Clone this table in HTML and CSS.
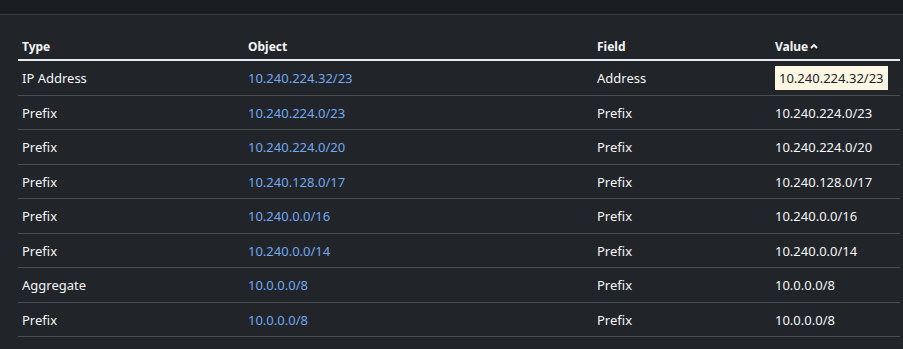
FILE: index.html
```html
<!DOCTYPE html>
<html lang="en">
  <head>
    <meta charset="utf-8" />
    <title>Related objects</title>
    <link rel="stylesheet" href="styles.css">
  </head>
  <body>
    <div class="topbar"></div>
    <main class="content">
      <table class="results">
        <thead>
          <tr>
            <th class="col-type">Type</th>
            <th class="col-object">Object</th>
            <th class="col-field">Field</th>
            <th class="col-value">Value<svg class="sort" width="8" height="6" viewBox="0 0 8 6"><path d="M1 5 L4 2 L7 5" fill="none" stroke="currentColor" stroke-width="1.8"/></svg></th>
          </tr>
        </thead>
        <tbody>
          <tr>
            <td>IP Address</td>
            <td><a href="#">10.240.224.32/23</a></td>
            <td>Address</td>
            <td><span class="highlight">10.240.224.32/23</span></td>
          </tr>
          <tr>
            <td>Prefix</td>
            <td><a href="#">10.240.224.0/23</a></td>
            <td>Prefix</td>
            <td>10.240.224.0/23</td>
          </tr>
          <tr>
            <td>Prefix</td>
            <td><a href="#">10.240.224.0/20</a></td>
            <td>Prefix</td>
            <td>10.240.224.0/20</td>
          </tr>
          <tr>
            <td>Prefix</td>
            <td><a href="#">10.240.128.0/17</a></td>
            <td>Prefix</td>
            <td>10.240.128.0/17</td>
          </tr>
          <tr>
            <td>Prefix</td>
            <td><a href="#">10.240.0.0/16</a></td>
            <td>Prefix</td>
            <td>10.240.0.0/16</td>
          </tr>
          <tr>
            <td>Prefix</td>
            <td><a href="#">10.240.0.0/14</a></td>
            <td>Prefix</td>
            <td>10.240.0.0/14</td>
          </tr>
          <tr>
            <td>Aggregate</td>
            <td><a href="#">10.0.0.0/8</a></td>
            <td>Prefix</td>
            <td>10.0.0.0/8</td>
          </tr>
          <tr>
            <td>Prefix</td>
            <td><a href="#">10.0.0.0/8</a></td>
            <td>Prefix</td>
            <td>10.0.0.0/8</td>
          </tr>
        </tbody>
      </table>
    </main>
  </body>
</html>
```

FILE: styles.css
```css
body {
  margin: 0;
  background-color: #212429;
  color: #f5f6f7;
  font-family: "Noto Sans", "Open Sans", sans-serif;
  font-size: 13px;
}

.topbar {
  height: 14px;
  background-color: #1b1e21;
  border-bottom: 1px solid #3d4046;
}

.content {
  padding: 14px 3px 0 18px;
}

.results {
  width: 100%;
  border-collapse: collapse;
  table-layout: fixed;
}

.results th,
.results td {
  text-align: left;
  padding: 7px 4px 6.5px;
  line-height: 20px;
  border-bottom: 1px solid #4a4d52;
}

.results th {
  font-size: 12px;
  font-weight: 700;
  padding-top: 8px;
  padding-bottom: 2px;
  border-bottom: 2px solid #e9eaec;
}

.col-type { width: 218px; }
.col-object { width: 341px; }
.col-field { width: 170px; }

.sort {
  margin-left: 2px;
  vertical-align: 2px;
}

.results a {
  color: #72a9f0;
  text-decoration: none;
}

.highlight {
  background-color: #fdf7e3;
  color: #1f2329;
  padding: 3px 4px;
}
```
